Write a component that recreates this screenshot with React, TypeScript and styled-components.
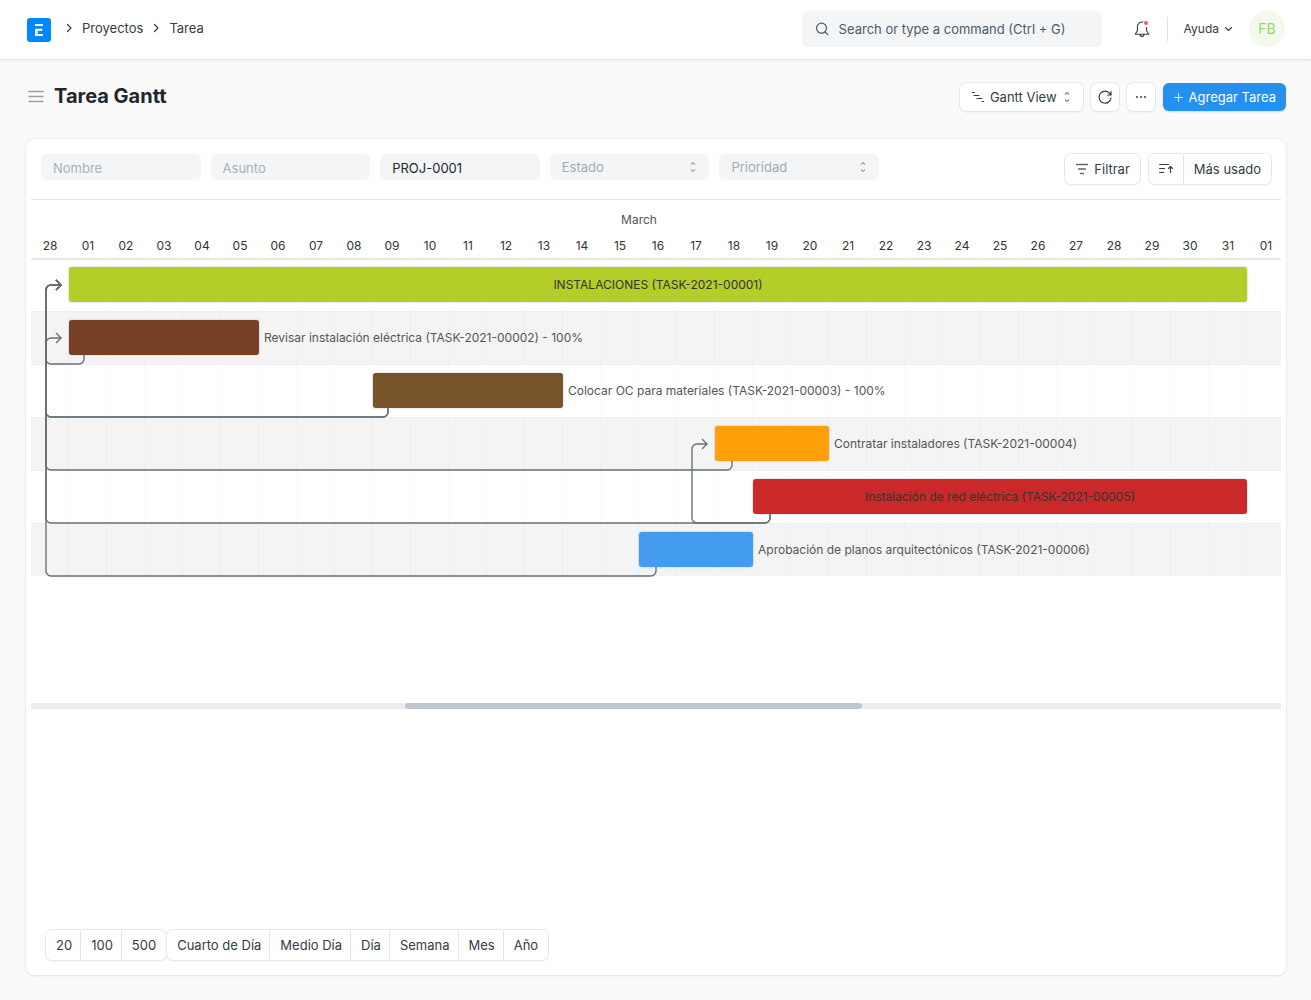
import React from "react";
import styled, { createGlobalStyle, css } from "styled-components";

const COL = 38;
const ROW = 53;
const BAR = 35;
const BAR_TOP = 9;

const GlobalStyle = createGlobalStyle`
  *, *::before, *::after { box-sizing: border-box; }
  body {
    margin: 0;
    background: #fafafa;
    color: #1f272e;
    font-family: Inter, "Liberation Sans", sans-serif;
    font-size: 13px;
    line-height: 20px;
  }
  button, input, select { font: inherit; color: inherit; margin: 0; }
  button { cursor: pointer; }
`;

const Page = styled.div`
  display: flex;
  flex-direction: column;
  min-height: 100vh;
`;

const Navbar = styled.header`
  display: flex;
  align-items: center;
  height: 59px;
  padding: 0 26px 0 27px;
  background: #fff;
  box-shadow: 0 1px 1px #dfe3e7, 0 2px 4px rgba(25, 39, 52, 0.05);
`;

const Logo = styled.a`
  display: flex;
  margin-right: 14px;
`;

const Crumbs = styled.nav`
  display: flex;
  align-items: center;
  gap: 9px;
  padding-bottom: 3px;
`;

const Crumb = styled.a`
  color: #333c44;
  text-decoration: none;
`;

const NavEnd = styled.div`
  display: flex;
  align-items: center;
  margin-left: auto;
  padding-bottom: 2px;
`;

const Search = styled.label`
  display: flex;
  align-items: center;
  gap: 9px;
  width: 300px;
  height: 36px;
  padding: 0 12px;
  border-radius: 6px;
  background: #f4f5f6;
`;

const SearchInput = styled.input`
  flex: 1;
  min-width: 0;
  padding: 0;
  border: 0;
  outline: 0;
  background: none;
  &::placeholder { color: #4c5a67; opacity: 1; }
`;

const IconButton = styled.button`
  display: flex;
  padding: 0;
  border: 0;
  background: none;
`;

const Bell = styled(IconButton)`
  margin-left: 30px;
`;

const Separator = styled.span`
  width: 1px;
  height: 24px;
  margin: 0 16px 0 15px;
  background: #dce0e3;
`;

const Help = styled(IconButton)`
  align-items: center;
  gap: 5px;
  font-size: 12px;
  color: #333c44;
`;

const Avatar = styled.button`
  width: 36px;
  height: 36px;
  margin-left: 16px;
  padding: 0;
  border: 0;
  border-radius: 50%;
  background: #f3f9ed;
  color: #93da62;
  font-size: 14px;
`;

const PageHead = styled.div`
  display: flex;
  align-items: center;
  justify-content: space-between;
  padding: 23px 25px 27px 28px;
`;

const TitleGroup = styled.div`
  display: flex;
  align-items: center;
  gap: 10px;
  padding-bottom: 2px;
`;

const Title = styled.h1`
  margin: 0;
  font-size: 20px;
  line-height: 28px;
  font-weight: 700;
`;

const Actions = styled.div`
  display: flex;
  gap: 8px;
`;

const buttonFace = css`
  display: flex;
  align-items: center;
  justify-content: center;
  border: 0;
  background: #fff;
  color: #333c44;
  white-space: nowrap;
`;

const raised = css`
  border-radius: 6px;
  box-shadow: 0 0 0 1px #e6e9eb, 0 1px 2px rgba(0, 0, 0, 0.12);
`;

const Button = styled.button<{ $square?: boolean; $tall?: boolean }>`
  ${buttonFace}
  ${raised}
  gap: 5px;
  height: ${(p) => (p.$tall ? 30 : 28)}px;
  padding: ${(p) => (p.$square ? 0 : p.$tall ? "0 10px" : "0 11px")};
  ${(p) => p.$square && "width: 28px;"}
`;

const Primary = styled(Button)`
  padding: 0 10px;
  background: #2490ef;
  color: #fff;
  box-shadow: 0 1px 2px rgba(0, 0, 0, 0.15);
`;

const Card = styled.main`
  display: flex;
  flex-direction: column;
  min-height: calc(100vh - 164px);
  margin: 0 25px 25px 26px;
  border-radius: 8px;
  background: #fff;
  box-shadow: 0 0 2px rgba(0, 0, 0, 0.12), 0 1px 3px rgba(0, 0, 0, 0.06);
`;

const Filters = styled.form`
  display: flex;
  align-items: flex-start;
  justify-content: space-between;
  gap: 16px;
  height: 61px;
  margin: 0 5px;
  padding: 15px 10px 0;
  border-bottom: 1px solid #e4e6e8;
`;

const Fields = styled.div`
  display: grid;
  grid-template-columns: repeat(5, minmax(0, 1fr));
  gap: 10px;
  flex: 0 1 838px;
`;

const field = css`
  width: 100%;
  height: 26px;
  border: 0;
  border-radius: 6px;
  outline: 0;
  background: #f4f5f6;
`;

const Input = styled.input`
  ${field}
  padding: 1px 12px 0;
  &::placeholder { color: #a6b1b9; opacity: 1; }
`;

const SelectWrap = styled.span`
  display: grid;
  align-items: center;
  > * { grid-area: 1 / 1; }
  > svg { justify-self: end; margin-right: 11px; pointer-events: none; }
`;

const Select = styled.select`
  ${field}
  appearance: none;
  padding: 0 24px 0 12px;
  color: #a0abb4;
`;

const FilterActions = styled.div`
  display: flex;
  gap: 9px;
`;

const Group = styled.div<{ $compact?: boolean }>`
  display: flex;
  ${raised}
  ${(p) => p.$compact && "> button:not(:last-child) { padding-right: 8px; }"}
`;

const GroupButton = styled.button`
  ${buttonFace}
  height: 30px;
  padding: 0 10px;
  border-right: 1px solid #e2e5e8;
  &:first-child { border-radius: 6px 0 0 6px; }
  &:last-child { border-radius: 0 6px 6px 0; border-right: 0; }
`;

const Gantt = styled.section`
  margin: 0 5px;
  overflow: hidden;
`;

const Days = styled.div`
  display: grid;
  grid-template-columns: repeat(33, ${COL}px);
  height: 58px;
  padding-top: 10px;
  font-size: 12px;
  text-align: center;
  color: #333;
`;

const Month = styled.span`
  grid-column: 1 / 33;
  line-height: 20px;
  color: #555;
`;

const Day = styled.span`
  grid-row: 2;
  padding-top: 3px;
`;

const Body = styled.div`
  position: relative;
  min-height: 445px;
  width: ${COL * 33}px;
`;

const Row = styled.div`
  display: grid;
  grid-template-columns: repeat(33, ${COL}px);
  height: ${ROW}px;
  padding-top: ${BAR_TOP}px;
  background: repeating-linear-gradient(
      to right,
      transparent 0 ${COL - 1}px,
      rgba(0, 0, 0, 0.02) ${COL - 1}px ${COL}px
    )
    #fff;
  &:nth-child(even) { background-color: #f4f4f4; }
  &:first-child { box-shadow: inset 0 2px #e4e6e8; }
  & + & { box-shadow: inset 0 1px #ebeff2; }
`;

const Bar = styled.div<{ $from: number; $days: number; $color: string }>`
  grid-column: ${(p) => p.$from + 1} / span ${(p) => p.$days};
  grid-row: 1;
  height: ${BAR}px;
  border-radius: 3px;
  background: ${(p) => p.$color};
  box-shadow: 0 0 2px rgba(141, 153, 166, 0.7);
  font-size: 12px;
  line-height: ${BAR}px;
  text-align: center;
  color: #333;
`;

const BarLabel = styled.span<{ $from: number }>`
  grid-column: ${(p) => p.$from + 1} / -1;
  grid-row: 1;
  padding-left: 5px;
  font-size: 12px;
  line-height: ${BAR}px;
  color: #555;
`;

const Arrows = styled.svg`
  position: absolute;
  top: 0;
  left: 0;
  pointer-events: none;
`;

const Track = styled.div`
  height: 6px;
  background: #ebeef0;
`;

const Thumb = styled.div`
  width: 36.6%;
  height: 6px;
  margin-left: 29.9%;
  border-radius: 3px;
  background: #c0c6cc;
`;

const Footer = styled.footer`
  display: flex;
  flex-wrap: wrap;
  gap: 1px;
  margin-top: auto;
  padding: 0 20px 15px;
`;

type Task = { name: string; from: number; days: number; color: string; outside?: boolean };

const tasks: Task[] = [
  { name: "INSTALACIONES (TASK-2021-00001)", from: 1, days: 31, color: "#b4cd29" },
  { name: "Revisar instalación eléctrica (TASK-2021-00002) - 100%", from: 1, days: 5, color: "#764127", outside: true },
  { name: "Colocar OC para materiales (TASK-2021-00003) - 100%", from: 9, days: 5, color: "#765427", outside: true },
  { name: "Contratar instaladores (TASK-2021-00004)", from: 18, days: 3, color: "#ffa00a", outside: true },
  { name: "Instalación de red eléctrica (TASK-2021-00005)", from: 19, days: 13, color: "#cb2929" },
  { name: "Aprobación de planos arquitectónicos (TASK-2021-00006)", from: 16, days: 3, color: "#449cf0", outside: true },
];

// [source task, target task]
const links: [number, number][] = [[1, 0], [2, 0], [2, 1], [3, 0], [4, 0], [4, 3], [5, 0]];

function arrowPath([source, target]: [number, number]) {
  const startX = tasks[source].from * COL + (source < 3 ? 15 : 17);
  const startY = source * ROW + BAR_TOP + BAR;
  const endX = tasks[target].from * COL - 8;
  const endY = target * ROW + BAR_TOP + 18;
  const left = endX - 15;
  return [
    `M${startX} ${startY}`,
    "v4 a5 5 0 0 1 -5 5",
    `H${left + 5}`,
    "a5 5 0 0 1 -5 -5",
    `V${endY + 5}`,
    "a5 5 0 0 1 5 -5",
    `H${endX}`,
    "m-5 -5 l5 5 l-5 5",
  ].join(" ");
}

const days = ["28", ...Array.from({ length: 31 }, (_, i) => String(i + 1).padStart(2, "0")), "01"];

const stroke = { fill: "none", stroke: "#333c44", strokeLinecap: "round", strokeLinejoin: "round" } as const;

const Chevron = () => (
  <svg width="8" height="10" viewBox="0 0 8 10" {...stroke} strokeWidth="1.2"><path d="M2.5 1.5 6 5 2.5 8.5" /></svg>
);

const UpDown = ({ color = "#333c44" }: { color?: string }) => (
  <svg width="10" height="12" viewBox="0 0 10 12" {...stroke} stroke={color} strokeWidth="1">
    <path d="M3.2 3.2 5 1.5l1.800 1.700M3.200 8.800 5 10.500l1.800-1.700" />
  </svg>
);

export default function App() {
  return (
    <Page>
      <GlobalStyle />
      <Navbar>
        <Logo href="#" aria-label="Inicio">
          <svg width="24" height="24" viewBox="0 0 24 24">
            <rect width="24" height="24" rx="3" fill="#0089ff" />
            <path d="M8 6h8v2H8zM8 10.700h7.300v2h-4.600V16H16v2H8z" fill="#fff" />
          </svg>
        </Logo>
        <Crumbs aria-label="Ruta">
          <Chevron />
          <Crumb href="#">Proyectos</Crumb>
          <Chevron />
          <Crumb href="#">Tarea</Crumb>
        </Crumbs>
        <NavEnd>
          <Search>
            <svg width="16" height="16" viewBox="0 0 16 16" {...stroke} stroke="#4c5a67" strokeWidth="1.2">
              <circle cx="7.500" cy="7.200" r="5" /><path d="m11.200 11 2.600 2.600" />
            </svg>
            <SearchInput type="text" placeholder="Search or type a command (Ctrl + G)" aria-label="Search" />
          </Search>
          <Bell type="button" aria-label="Notificaciones">
            <svg width="20" height="20" viewBox="0 0 20 20" {...stroke} strokeWidth="1.1">
              <path d="M11 3C7.800 2.600 5.400 4.800 5.400 7.800v4L3.200 15.200h13.600l-2.200-3.400V8.500M8 15.400c0 2.600 4 2.600 4 0" />
              <circle cx="14" cy="4" r="2" fill="#ff5858" stroke="none" />
            </svg>
          </Bell>
          <Separator />
          <Help type="button">
            Ayuda
            <svg width="9" height="7" viewBox="0 0 9 7" {...stroke} strokeWidth="1.100"><path d="m1.500 2.500 3 3 3-3" /></svg>
          </Help>
          <Avatar type="button">FB</Avatar>
        </NavEnd>
      </Navbar>

      <PageHead>
        <TitleGroup>
          <IconButton type="button" aria-label="Menú">
            <svg width="16" height="14" viewBox="0 0 16 14" stroke="#98a1a9" strokeWidth="1.500" strokeLinecap="round">
              <path d="M1 2.500h14M1 7.500h14M1 12.500h14" />
            </svg>
          </IconButton>
          <Title>Tarea Gantt</Title>
        </TitleGroup>
        <Actions>
          <Button type="button">
            <svg width="14" height="12" viewBox="0 0 14 12" {...stroke} strokeWidth="1.100">
              <path d="M1.500 1.500h2M3 4.500h5M6 7.500h5M11 10.500h1.500" />
            </svg>
            Gantt View
            <UpDown />
          </Button>
          <Button type="button" $square aria-label="Actualizar">
            <svg width="16" height="16" viewBox="0 0 16 16" {...stroke} strokeWidth="1.200">
              <path d="M14 9A6 6 0 1 1 12.600 4.300L14 6M14 2.500V6h-3.500" />
            </svg>
          </Button>
          <Button type="button" $square aria-label="Más opciones">
            <svg width="12" height="4" viewBox="0 0 12 4" fill="#333c44">
              <circle cx="2" cy="2" r="1" /><circle cx="6" cy="2" r="1" /><circle cx="10" cy="2" r="1" />
            </svg>
          </Button>
          <Primary type="button">
            <svg width="11" height="11" viewBox="0 0 11 11" stroke="#d3e9fc" strokeWidth="1.100" strokeLinecap="round">
              <path d="M5.500 1.500v8M1.500 5.500h8" />
            </svg>
            Agregar Tarea
          </Primary>
        </Actions>
      </PageHead>

      <Card>
        <Filters>
          <Fields>
            <Input type="text" placeholder="Nombre" aria-label="Nombre" />
            <Input type="text" placeholder="Asunto" aria-label="Asunto" />
            <Input type="text" defaultValue="PROJ-0001" aria-label="Proyecto" />
            <SelectWrap>
              <Select aria-label="Estado"><option>Estado</option></Select>
              <UpDown color="#6b757d" />
            </SelectWrap>
            <SelectWrap>
              <Select aria-label="Prioridad"><option>Prioridad</option></Select>
              <UpDown color="#6b757d" />
            </SelectWrap>
          </Fields>
          <FilterActions>
            <Button type="button" $tall>
              <svg width="14" height="12" viewBox="0 0 14 12" stroke="#5f686f" strokeWidth="1.300" strokeLinecap="round">
                <path d="M1.500 1.500h11M3.500 6h7M5.500 10.500h3" />
              </svg>
              Filtrar
            </Button>
            <Group>
              <GroupButton type="button" aria-label="Orden">
                <svg width="14" height="12" viewBox="0 0 14 12" {...stroke} strokeWidth="1.100">
                  <path d="M.600 1.500h9M.600 5.500h5M.600 9.500h4M11.500 9.500v-6M9.500 5.500l2-2 2 2" />
                </svg>
              </GroupButton>
              <GroupButton type="button">Más usado</GroupButton>
            </Group>
          </FilterActions>
        </Filters>

        <Gantt>
          <Days>
            <Month>March</Month>
            {days.map((day, i) => <Day key={i}>{day}</Day>)}
          </Days>
          <Body>
            {tasks.map((task) => (
              <Row key={task.name}>
                <Bar $from={task.from} $days={task.days} $color={task.color}>
                  {!task.outside && task.name}
                </Bar>
                {task.outside && <BarLabel $from={task.from + task.days}>{task.name}</BarLabel>}
              </Row>
            ))}
            <Arrows width={COL * 33} height={ROW * 6 + 4} fill="none" stroke="#687178" strokeWidth="1.400">
              {links.map((link) => <path key={link.join("-")} d={arrowPath(link)} />)}
            </Arrows>
          </Body>
          <Track><Thumb /></Track>
        </Gantt>

        <Footer>
          <Group $compact>
            {["20", "100", "500"].map((n) => <GroupButton type="button" key={n}>{n}</GroupButton>)}
          </Group>
          <Group $compact>
            {["Cuarto de Día", "Medio Día", "Día", "Semana", "Mes", "Año"].map((n) => (
              <GroupButton type="button" key={n}>{n}</GroupButton>
            ))}
          </Group>
        </Footer>
      </Card>
    </Page>
  );
}
